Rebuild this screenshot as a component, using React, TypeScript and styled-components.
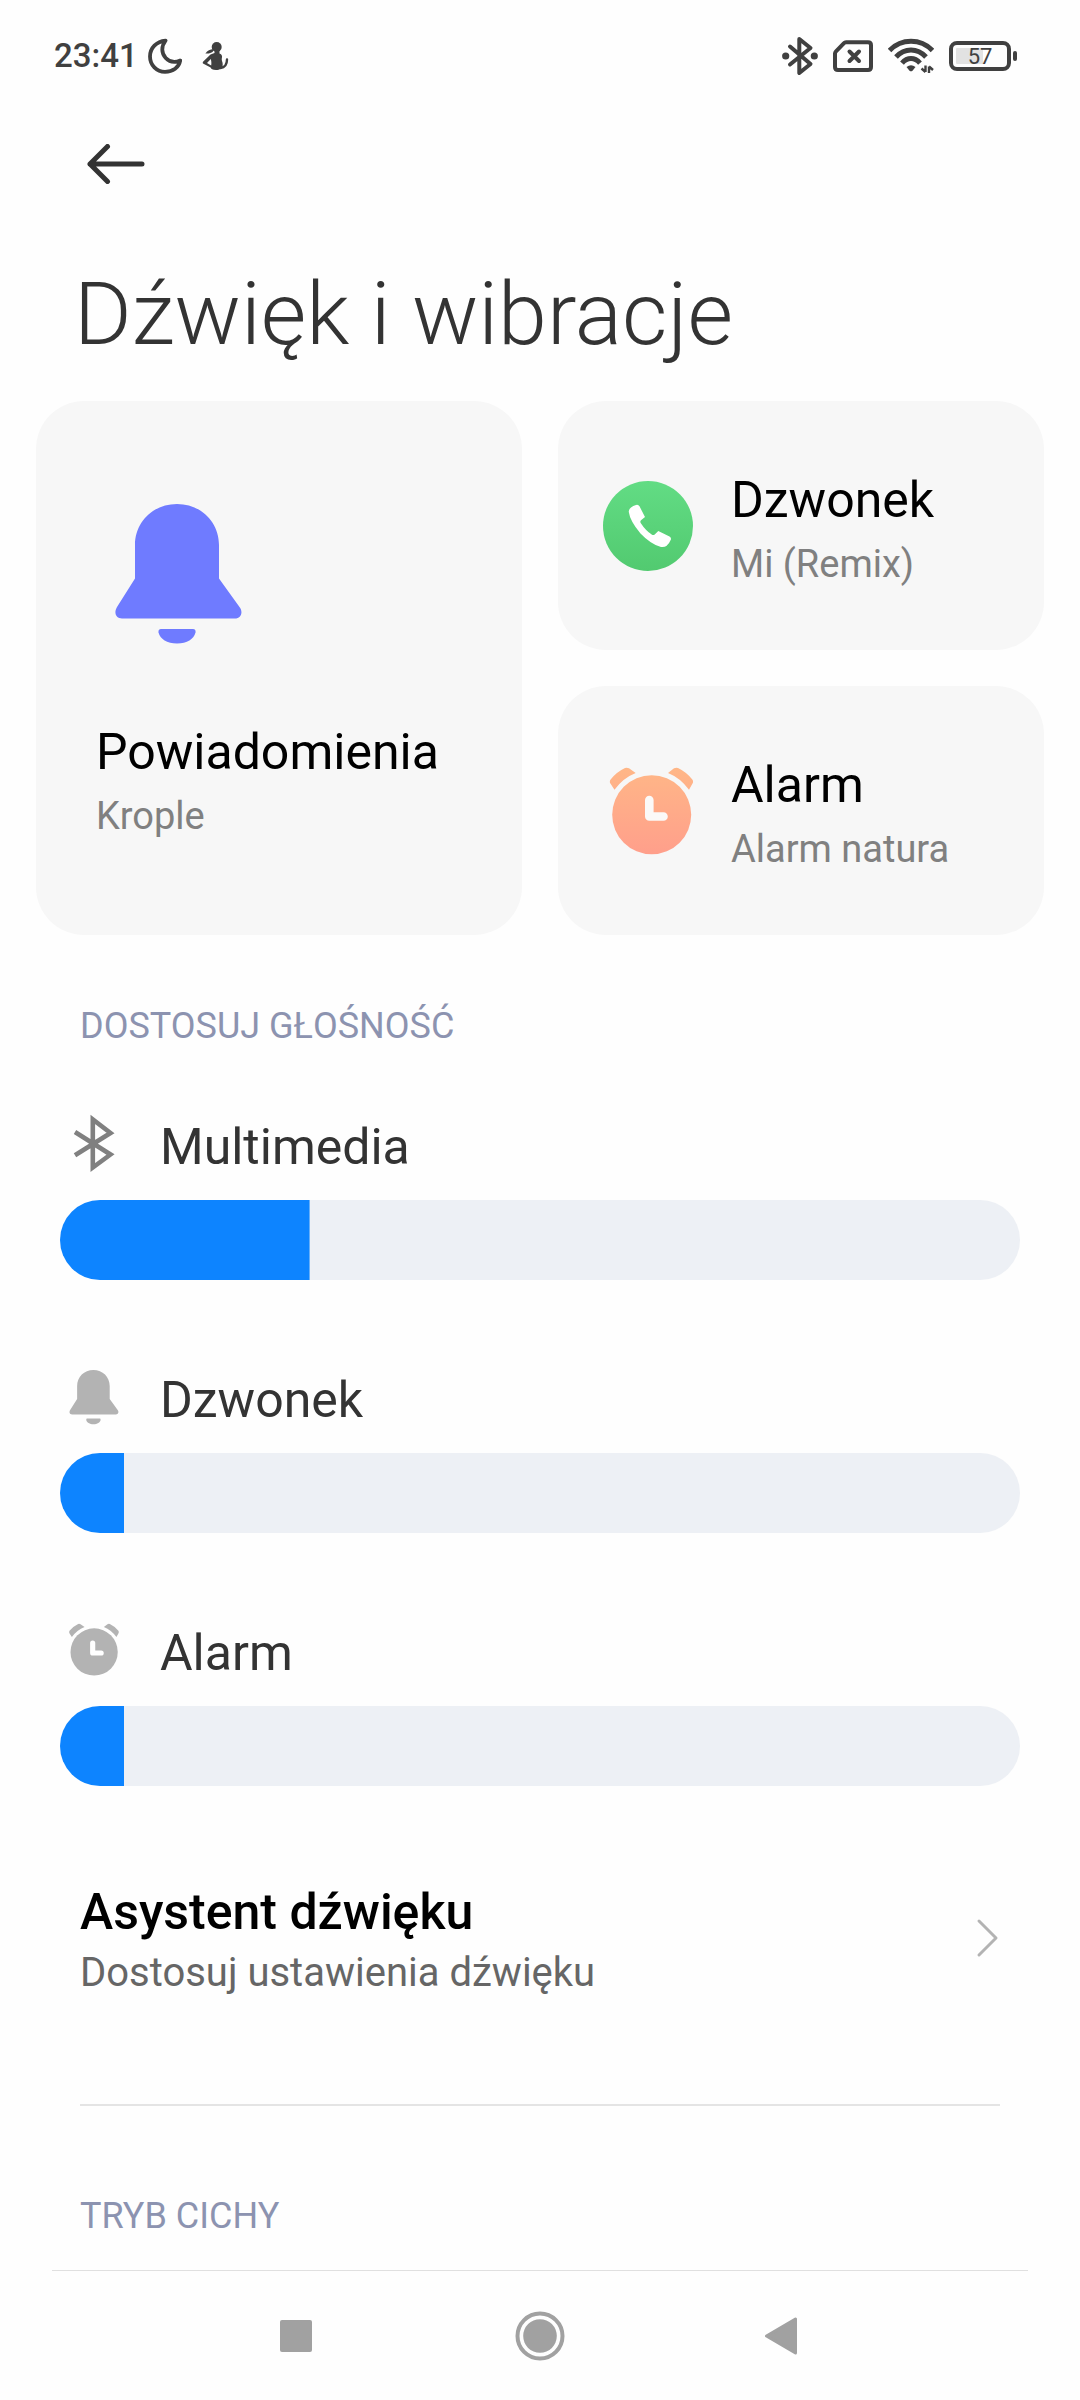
import { useState } from "react";
import type { CSSProperties, ReactNode } from "react";
import styled, { createGlobalStyle } from "styled-components";

const GlobalStyle = createGlobalStyle`
  *, *::before, *::after { box-sizing: border-box; }
  body {
    margin: 0;
    background: #fefefe;
    color: #333333;
    font-family: Roboto, "Noto Sans", sans-serif;
  }
  svg { display: block; flex: none; }
  h1, h2, p { margin: 0; font-weight: 400; }
  button { border: 0; padding: 0; background: none; font: inherit; color: inherit; cursor: pointer; }
`;

const Screen = styled.div`
  display: flex;
  flex-direction: column;
  min-height: 100vh;
`;

const StatusBar = styled.div`
  display: flex;
  align-items: center;
  justify-content: space-between;
  height: 112px;
  padding: 0 63px 0 54px;
  color: #404040;
`;

const StatusGroup = styled.div<{ $gap: number }>`
  display: flex;
  align-items: center;
  gap: ${(p) => p.$gap}px;
`;

const Clock = styled.time`
  font-size: 33px;
  line-height: 40px;
  font-weight: 500;
  margin-right: -10px;
`;

const Battery = styled.div`
  display: flex;
  align-items: center;
  gap: 2px;
`;

const BatteryCell = styled.div`
  width: 62px;
  height: 30px;
  padding: 3px;
  border: 4px solid #404040;
  border-radius: 8px;
  background: linear-gradient(to right, #e2e2e2 57%, transparent 57%) content-box;
  font-size: 22px;
  line-height: 17px;
  text-align: center;
`;

const BatteryTip = styled.div`
  width: 4px;
  height: 10px;
  border-radius: 2px;
  background: #404040;
`;

const TopBar = styled.div`
  display: flex;
  align-items: center;
  height: 104px;
  padding: 0 87px;
`;

const Title = styled.h1`
  padding: 46px 74px 35px;
  font-size: 88px;
  line-height: 104px;
  font-weight: 300;
`;

const Cards = styled.div`
  display: grid;
  grid-template-columns: 1fr 1fr;
  grid-auto-rows: minmax(249px, auto);
  gap: 36px;
  padding: 0 36px;
`;

const Card = styled.button<{ $tall?: boolean }>`
  display: flex;
  flex-direction: ${(p) => (p.$tall ? "column" : "row")};
  align-items: ${(p) => (p.$tall ? "flex-start" : "center")};
  grid-row: ${(p) => (p.$tall ? "span 2" : "auto")};
  gap: ${(p) => (p.$tall ? 62 : 38)}px;
  padding: ${(p) => (p.$tall ? "90px 60px" : "0 45px")};
  border-radius: 48px;
  background: #f7f7f7;
  text-align: left;
`;

const CardText = styled.span`
  display: flex;
  flex-direction: column;
  gap: 14px;
  padding-top: 6px;
`;

const CardName = styled.span`
  font-size: 50px;
  line-height: 56px;
  color: #000000;
`;

const CardValue = styled.span`
  font-size: 38px;
  line-height: 44px;
  color: #808080;
`;

const SectionTitle = styled.h2`
  padding: 0 80px;
  font-size: 36px;
  line-height: 44px;
  color: #8c93b0;
`;

const VolumeSection = styled.section`
  padding-top: 69px;
`;

const Volumes = styled.div`
  display: flex;
  flex-direction: column;
  gap: 85px;
  padding: 64px 60px 0;
`;

const Volume = styled.div`
  display: flex;
  flex-direction: column;
  gap: 24px;
`;

const VolumeLabel = styled.label`
  display: flex;
  align-items: center;
  gap: 34px;
  height: 64px;
  padding-left: 2px;
  font-size: 50px;
  line-height: 56px;
`;

const VolumeName = styled.span`
  padding-top: 6px;
`;

const Slider = styled.input`
  appearance: none;
  width: 100%;
  height: 80px;
  margin: 0;
  border-radius: 40px;
  background: linear-gradient(#0d84ff, #0d84ff) left / var(--level) 100% no-repeat #edf0f5;
  cursor: pointer;

  &::-webkit-slider-thumb {
    appearance: none;
    width: 1px;
    height: 80px;
    background: transparent;
  }
`;

const LinkRow = styled.a`
  display: flex;
  align-items: center;
  justify-content: space-between;
  margin-top: 92px;
  padding: 0 80px;
  color: inherit;
  text-decoration: none;
`;

const LinkText = styled.span`
  display: flex;
  flex-direction: column;
  gap: 9px;
  padding-top: 6px;
`;

const LinkName = styled.span`
  font-size: 50px;
  line-height: 56px;
  font-weight: 500;
  color: #000000;
`;

const LinkHint = styled.span`
  font-size: 40px;
  line-height: 48px;
  color: #666666;
`;

const Divider = styled.hr`
  height: 2px;
  margin: 107px 80px 88px;
  border: 0;
  background: #e4e4e4;
`;

const NavBar = styled.nav`
  display: flex;
  justify-content: center;
  height: 130px;
  margin: auto 52px 0;
  border-top: 1px solid #e0e0e0;
`;

const NavButton = styled.button`
  display: flex;
  flex: 0 1 244px;
  align-items: center;
  justify-content: center;
  color: #a1a1a1;
`;

const MoonIcon = () => (
  <svg width="34" height="36" viewBox="0 0 34 36" fill="none" stroke="currentColor" strokeWidth="3.8" strokeLinejoin="round">
    <path d="M17.5 2.6C8.5 3.4 2 10 2 18.5C2 27 8.600 33.800 17 33.800C25 33.800 31 29.500 32.200 22.500C27 24.800 21.500 24 17.700 20C13.400 15.500 13 8.500 17.500 2.600Z" />
  </svg>
);

const FigureIcon = () => (
  <svg width="28" height="30" viewBox="0 0 28 30" fill="currentColor">
    <circle cx="14.700" cy="6" r="5" />
    <path d="M3.400 12.400C5.500 9.500 8 8.600 11.500 8L11 10.500C8.500 12.400 6 13 3.400 12.400Z" />
    <path d="M12.500 9H17.500V12.500C20 13.500 20.500 15 19.800 17.500C19.300 19.500 21 21 20.700 24C20.500 27.500 18 29 14 29C10.500 29 9 28 8.600 26.500L1 22.500C.4 21.800.8 21 1.500 20.200L8.500 13.500L12.500 12ZM8.800 18L5 22L9.200 24.500C9.600 22 9.300 20 8.800 18Z" fillRule="evenodd" />
    <path d="M18.500 27C22.500 26.500 25 24.500 25 18.500" fill="none" stroke="currentColor" strokeWidth="2.400" strokeLinecap="round" />
  </svg>
);

const BluetoothActiveIcon = () => (
  <svg width="36" height="40" viewBox="0 0 36 40" fill="none" stroke="currentColor" strokeWidth="4" strokeLinecap="round" strokeLinejoin="round">
    <path d="M8 10.500L28.500 28L17.300 37V3L28.500 12L8 28.500" />
    <circle cx="3.700" cy="20" r="3.600" fill="currentColor" stroke="none" />
    <circle cx="32.300" cy="20" r="3.600" fill="currentColor" stroke="none" />
  </svg>
);

const SimIcon = () => (
  <svg width="40" height="32" viewBox="0 0 40 32" fill="none" stroke="currentColor" strokeWidth="4" strokeLinejoin="round">
    <path d="M13 2.300H35Q38 2.300 38 5.300V27Q38 30 35 30H5Q2 30 2 27V13.500Q2 12.300 3 11.300L11 3.200Q11.800 2.300 13 2.300Z" />
    <path d="M16.500 11.500L26 21M26 11.500L16.500 21" strokeLinecap="round" />
  </svg>
);

const WifiIcon = () => (
  <svg width="46" height="36" viewBox="0 0 46 36" fill="none" stroke="currentColor" strokeWidth="5" strokeLinecap="butt">
    <path d="M1.500 12.500Q10.500 3.300 23 3.300Q35.500 3.300 44.500 12.500" />
    <path d="M8 19Q14.500 12 23 12Q31.500 12 38 19" />
    <path d="M14 25.200Q18 20.600 23 20.600Q28 20.600 32 25.200" />
    <path d="M18.500 29Q23 25.500 27.500 29L24.500 32.700Q23 34 21.500 32.700Z" fill="currentColor" stroke="none" />
    <path d="M37.500 27.500V34M37.500 34L33.500 30.500M41 35V28.500M41 28.500L45 32" strokeWidth="2.400" />
  </svg>
);

const BackArrowIcon = () => (
  <svg width="58" height="40" viewBox="0 0 58 40" fill="none" stroke="#333333" strokeWidth="5" strokeLinecap="round" strokeLinejoin="round">
    <path d="M55 20H3M20.500 2.500L3 20L20.500 37.500" />
  </svg>
);

const BellIcon = ({ size, color }: { size: number; color: string }) => (
  <svg width={size} height={size} viewBox="0 0 165 165" fill={color}>
    <path d="M81 13C57 13 39 31 39 54V87.500L21 116C17.500 122 20 127.500 26 127.500H139C145 127.500 147.500 121 143.500 116L123 87.500V54C123 31 105 13 81 13Z" />
    <path d="M65 138H97Q100 138 99.500 141.500C98 148 91 152.500 81 152.500C71 152.500 64 148 62.500 141.500Q62 138 65 138Z" />
  </svg>
);

const PhoneIcon = () => (
  <svg width="90" height="90" viewBox="0 0 90 90">
    <defs>
      <linearGradient id="phoneFill" x1="0" y1="0" x2="0" y2="1">
        <stop offset="0" stopColor="#62dc84" />
        <stop offset="1" stopColor="#52ca70" />
      </linearGradient>
    </defs>
    <circle cx="45" cy="45" r="45" fill="url(#phoneFill)" />
    <path
      fill="#ffffff"
      d="M33 23.900Q35.300 23.200 36.500 25.300L42 36L38 39.300Q36.800 40.500 37.700 42Q42.500 49.500 49 53.800Q50.500 54.600 51.700 53.400L55.300 50L66.500 55.500Q68.500 56.700 67.800 58.700Q66 63 63.400 65Q61.500 66.400 58 66Q48 63.500 37.500 52.500Q27 40 25.800 31Q25.500 28.500 28 26.500Q30 24.800 33 23.900Z"
    />
  </svg>
);

const alarmEars =
  "M7.600 13.500Q13.500 6 22 2Q24 1.200 26 2.300L32.700 7Q20 12 11.500 23.800L7.400 17.500Q6.200 15.500 7.600 13.500ZM89.300 13.500Q83.400 6 75 2Q73 1.200 71 2.300L65 7Q77.500 12 86 23.800L89.500 17.500Q90.700 15.500 89.300 13.500Z";

const AlarmIcon = () => (
  <svg width="90" height="90" viewBox="0 0 90 90">
    <defs>
      <linearGradient id="alarmFill" gradientUnits="userSpaceOnUse" x1="0" y1="0" x2="0" y2="88">
        <stop offset="0" stopColor="#ffb787" />
        <stop offset="1" stopColor="#ff9f8b" />
      </linearGradient>
    </defs>
    <g fill="url(#alarmFill)">
      <path d={alarmEars} />
      <circle cx="48.700" cy="48.800" r="39.500" />
    </g>
    <path d="M46.300 34V50.500H60.500" fill="none" stroke="#fbf9f8" strokeWidth="8.600" strokeLinecap="round" strokeLinejoin="round" />
  </svg>
);

const SmallAlarmIcon = () => (
  <svg width="64" height="64" viewBox="-5 -8 107 107" fill="#b3b3b3">
    <path d={alarmEars} />
    <circle cx="48.700" cy="48.800" r="39.500" />
    <path d="M46.300 34V50.500H60.500" fill="none" stroke="#ffffff" strokeWidth="8.600" strokeLinecap="round" strokeLinejoin="round" />
  </svg>
);

const BluetoothIcon = () => (
  <svg width="64" height="64" viewBox="0 0 64 64" fill="none" stroke="#808080" strokeWidth="4.600">
    <path d="M13 20L48.500 42.500L30.800 55.500V7.500L48.500 21L13 43.300" />
  </svg>
);

const ChevronIcon = () => (
  <svg width="24" height="40" viewBox="0 0 24 40" fill="none" stroke="#b3b3b3" strokeWidth="3" strokeLinecap="round" strokeLinejoin="round">
    <path d="M3 3L20 20L3 37" />
  </svg>
);

const SquareIcon = () => (
  <svg width="34" height="34" viewBox="0 0 34 34" fill="currentColor">
    <rect x="1" y="1" width="32" height="32" rx="2" />
  </svg>
);

const CircleIcon = () => (
  <svg width="50" height="50" viewBox="0 0 50 50">
    <circle cx="25" cy="25" r="22.500" fill="none" stroke="currentColor" strokeWidth="4" />
    <circle cx="25" cy="25" r="16.800" fill="currentColor" />
  </svg>
);

const TriangleIcon = () => (
  <svg width="38" height="40" viewBox="0 0 38 40" fill="currentColor" stroke="currentColor" strokeWidth="3" strokeLinejoin="round">
    <path d="M30.500 3V37L1.500 20Z" />
  </svg>
);

type VolumeControlProps = { id: string; name: string; icon: ReactNode; initial: number; max: number };

const VolumeControl = ({ id, name, icon, initial, max }: VolumeControlProps) => {
  const [value, setValue] = useState(initial);
  return (
    <Volume>
      <VolumeLabel htmlFor={id}>
        {icon}
        <VolumeName>{name}</VolumeName>
      </VolumeLabel>
      <Slider
        id={id}
        type="range"
        min={0}
        max={max}
        value={value}
        onChange={(e) => setValue(Number(e.target.value))}
        style={{ "--level": `${(value / max) * 100}%` } as CSSProperties}
      />
    </Volume>
  );
};

export default function App() {
  return (
    <Screen>
      <GlobalStyle />
      <StatusBar>
        <StatusGroup $gap={20}>
          <Clock>23:41</Clock>
          <MoonIcon />
          <FigureIcon />
        </StatusGroup>
        <StatusGroup $gap={15}>
          <BluetoothActiveIcon />
          <SimIcon />
          <WifiIcon />
          <Battery>
            <BatteryCell>57</BatteryCell>
            <BatteryTip />
          </Battery>
        </StatusGroup>
      </StatusBar>

      <TopBar>
        <button type="button" aria-label="Wstecz">
          <BackArrowIcon />
        </button>
      </TopBar>
      <Title>Dźwięk i wibracje</Title>

      <Cards>
        <Card type="button" $tall>
          <BellIcon size={165} color="#6f7bff" />
          <CardText>
            <CardName>Powiadomienia</CardName>
            <CardValue>Krople</CardValue>
          </CardText>
        </Card>
        <Card type="button">
          <PhoneIcon />
          <CardText>
            <CardName>Dzwonek</CardName>
            <CardValue>Mi (Remix)</CardValue>
          </CardText>
        </Card>
        <Card type="button">
          <AlarmIcon />
          <CardText>
            <CardName>Alarm</CardName>
            <CardValue>Alarm natura</CardValue>
          </CardText>
        </Card>
      </Cards>

      <VolumeSection>
        <SectionTitle>DOSTOSUJ GŁOŚNOŚĆ</SectionTitle>
        <Volumes>
          <VolumeControl id="media" name="Multimedia" icon={<BluetoothIcon />} initial={39} max={150} />
          <VolumeControl id="ringtone" name="Dzwonek" icon={<BellIcon size={64} color="#b3b3b3" />} initial={1} max={15} />
          <VolumeControl id="alarm" name="Alarm" icon={<SmallAlarmIcon />} initial={1} max={15} />
        </Volumes>
      </VolumeSection>

      <LinkRow href="#asystent">
        <LinkText>
          <LinkName>Asystent dźwięku</LinkName>
          <LinkHint>Dostosuj ustawienia dźwięku</LinkHint>
        </LinkText>
        <ChevronIcon />
      </LinkRow>
      <Divider />
      <SectionTitle>TRYB CICHY</SectionTitle>

      <NavBar>
        <NavButton type="button" aria-label="Ostatnie">
          <SquareIcon />
        </NavButton>
        <NavButton type="button" aria-label="Ekran główny">
          <CircleIcon />
        </NavButton>
        <NavButton type="button" aria-label="Cofnij">
          <TriangleIcon />
        </NavButton>
      </NavBar>
    </Screen>
  );
}
